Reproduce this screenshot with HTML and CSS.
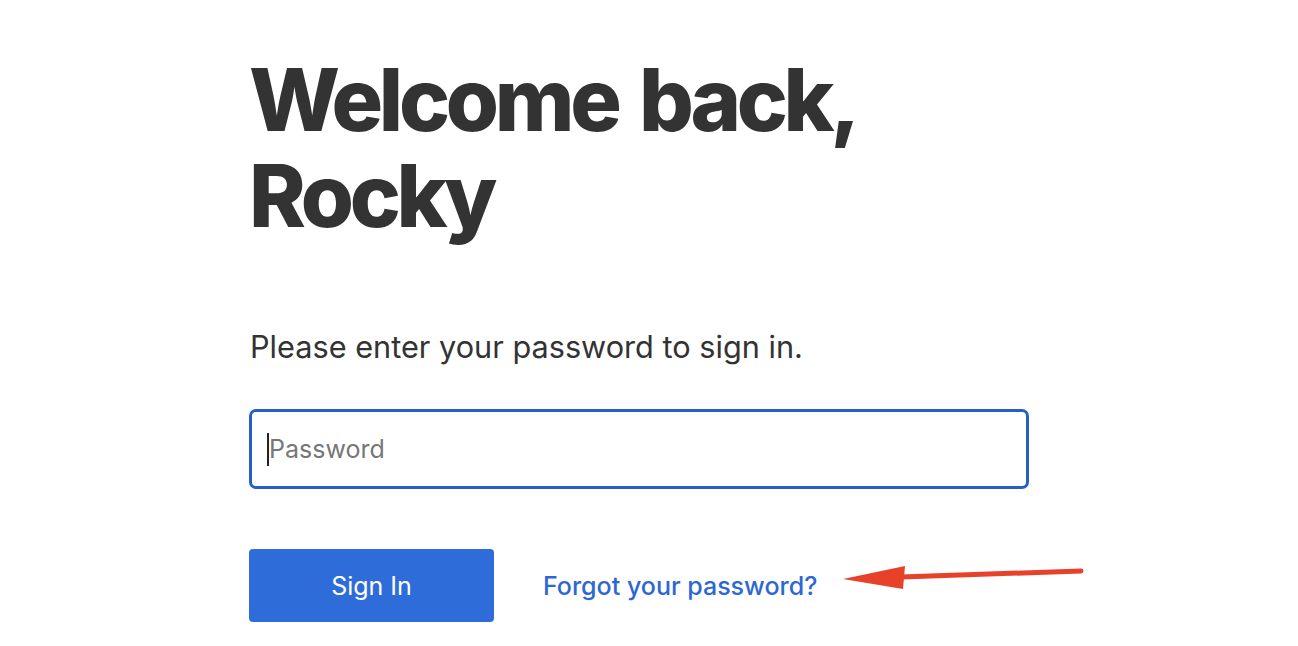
FILE: index.html
```html
<!DOCTYPE html>
<html lang="en">
<head>
<meta charset="utf-8">
<title>Sign in</title>
<link rel="stylesheet" href="styles.css">
</head>
<body>
<main class="page">
  <h1 class="title">Welcome back,<br>Rocky</h1>
  <p class="lead">Please enter your password to sign in.</p>
  <div class="field"><span class="caret"></span><span class="placeholder">Password</span></div>
  <div class="actions">
    <button class="btn">Sign In</button>
    <a class="link" href="#">Forgot your password?</a>
  </div>
</main>
<svg class="arrow" width="260" height="40" viewBox="0 0 260 40">
  <path d="M240 11 L60 17" stroke="#e8412a" stroke-width="5" stroke-linecap="round" fill="none"/>
  <path d="M2 19 L64 6 L62 29 Z" fill="#e8412a"/>
</svg>
</body>
</html>
```
FILE: styles.css
```css
html, body {
  margin: 0;
  background: #fff;
}
body {
  font-family: Inter, "Liberation Sans", sans-serif;
  color: #333;
}
.page {
  width: 780px;
  padding: 52px 0 0 249px;
}
.title {
  margin: 0;
  font-size: 86px;
  line-height: 96px;
  font-weight: 800;
  letter-spacing: -4.3px;
  word-spacing: 7px;
  color: #333;
}
.lead {
  margin: 83px 0 0 1px;
  font-size: 30.7px;
  line-height: 40px;
  color: #333;
}
.field {
  margin-top: 42px;
  height: 74px;
  border: 3px solid #2360c8;
  border-radius: 7px;
  display: flex;
  align-items: center;
  padding-left: 15px;
}
.caret {
  width: 2px;
  height: 33px;
  background: #222;
}
.placeholder {
  font-size: 25px;
  color: #777;
}
.actions {
  margin-top: 60px;
  display: flex;
  align-items: center;
  gap: 49px;
}
.btn {
  width: 245px;
  height: 73px;
  border: none;
  border-radius: 4px;
  background: #2e6cd9;
  color: #fff;
  font-family: inherit;
  font-size: 25px;
}
.link {
  color: #2d67d4;
  font-size: 25px;
  font-weight: 500;
  text-decoration: none;
}
.arrow {
  position: absolute;
  left: 841px;
  top: 560px;
}
```
